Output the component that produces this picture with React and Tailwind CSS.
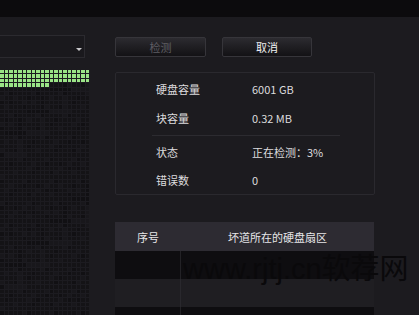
import React from "react";

const COLS = 20;
const ROWS = 56;

// shade for the dark (unchecked) blocks, a little uneven like the original
function darkShade(r, c) {
  const v = (r * 7 + c * 13 + ((r * c) % 5)) % 6;
  if (v === 0) return "bg-[#18171b]";
  if (v === 1) return "bg-[#111013]";
  return "bg-[#141316]";
}

function BlockGrid() {
  const cells = [];
  for (let r = 0; r < ROWS; r++) {
    for (let c = 0; c < COLS; c++) {
      const green = r < 3 || (r === 3 && c < 11);
      cells.push(
        <div
          key={r + "-" + c}
          className={green ? "bg-[#9be487]" : darkShade(r, c)}
        />
      );
    }
  }
  return (
    <div className="mt-[12px] w-[89px] grid grid-cols-[repeat(20,1fr)] auto-rows-[3.4px] gap-px bg-[#1c1b20]">
      {cells}
    </div>
  );
}

function InfoRow({ label, value }) {
  return (
    <div className="flex h-[16px] items-center pl-[40px]">
      <span className="w-[96px]">{label}</span>
      <span>{value}</span>
    </div>
  );
}

export default function App() {
  return (
    <div
      className="w-[419px] h-[315px] overflow-hidden bg-[#1c1b1f] text-[11px] text-[#dcdcde] relative"
      style={{ fontFamily: '"Noto Sans CJK SC", "Noto Sans", sans-serif' }}
    >
      {/* top strip */}
      <div className="h-[17px] bg-[#0c0b0d]" />

      <div className="flex">
        {/* left: drive select + block map */}
        <div className="w-[89px] shrink-0">
          <div className="mt-[18px] h-[23px] w-[85px] border border-l-0 border-[#2b2a2f] bg-[#1a191d] flex items-center justify-end pr-[2px] pt-[5px]">
            <div className="w-0 h-0 border-l-[3px] border-r-[3px] border-t-[3px] border-l-transparent border-r-transparent border-t-[#c9c9cc]" />
          </div>
          <BlockGrid />
        </div>

        {/* right: controls, info, table */}
        <div className="ml-[26px] w-[260px] shrink-0">
          <div className="mt-[20px] flex gap-[16px]">
            <button className="w-[91px] h-[20px] rounded-[2px] border border-[#36353a] bg-gradient-to-b from-[#2c2b30] to-[#131215] text-[#5f5e64] leading-none">
              检测
            </button>
            <button className="w-[90px] h-[20px] rounded-[2px] border border-[#36353a] bg-gradient-to-b from-[#2c2b30] to-[#131215] text-[#f0f0f2] leading-none">
              取消
            </button>
          </div>

          <div className="mt-[15px] h-[123px] border border-[#2a292e] rounded-[2px] pt-[8px]">
            <InfoRow label="硬盘容量" value="6001 GB" />
            <div className="mt-[13px]">
              <InfoRow label="块容量" value="0.32 MB" />
            </div>
            <div className="mt-[9px] ml-[36px] w-[188px] h-px bg-[#2c2b30]" />
            <div className="mt-[8px]">
              <InfoRow label="状态" value="正在检测：3%" />
            </div>
            <div className="mt-[12px]">
              <InfoRow label="错误数" value="0" />
            </div>
          </div>

          <div className="mt-[27px] w-[259px]">
            <div className="h-[29px] flex items-center pt-[2px] bg-[#2d2b32] text-[#e6e6e8]">
              <span className="w-[66px] text-center">序号</span>
              <span className="flex-1 text-center">坏道所在的硬盘扇区</span>
            </div>
            <div className="h-[28px] flex bg-[#0e0d10]">
              <div className="w-[66px] border-r border-[#232226]" />
            </div>
            <div className="h-[28px] flex bg-[#1f1e22]">
              <div className="w-[66px] border-r border-[#29282d]" />
            </div>
            <div className="h-[28px] flex bg-[#0e0d10]">
              <div className="w-[66px] border-r border-[#232226]" />
            </div>
          </div>
        </div>
      </div>

      {/* watermark */}
      <div
        className="absolute left-[183px] top-[252px] text-[29px] leading-[34px] text-[#0a090b] whitespace-nowrap"
        style={{ fontFamily: '"Liberation Sans", "Noto Sans CJK SC", sans-serif' }}
      >
        www.rjtj.cn软荐网
      </div>
    </div>
  );
}
